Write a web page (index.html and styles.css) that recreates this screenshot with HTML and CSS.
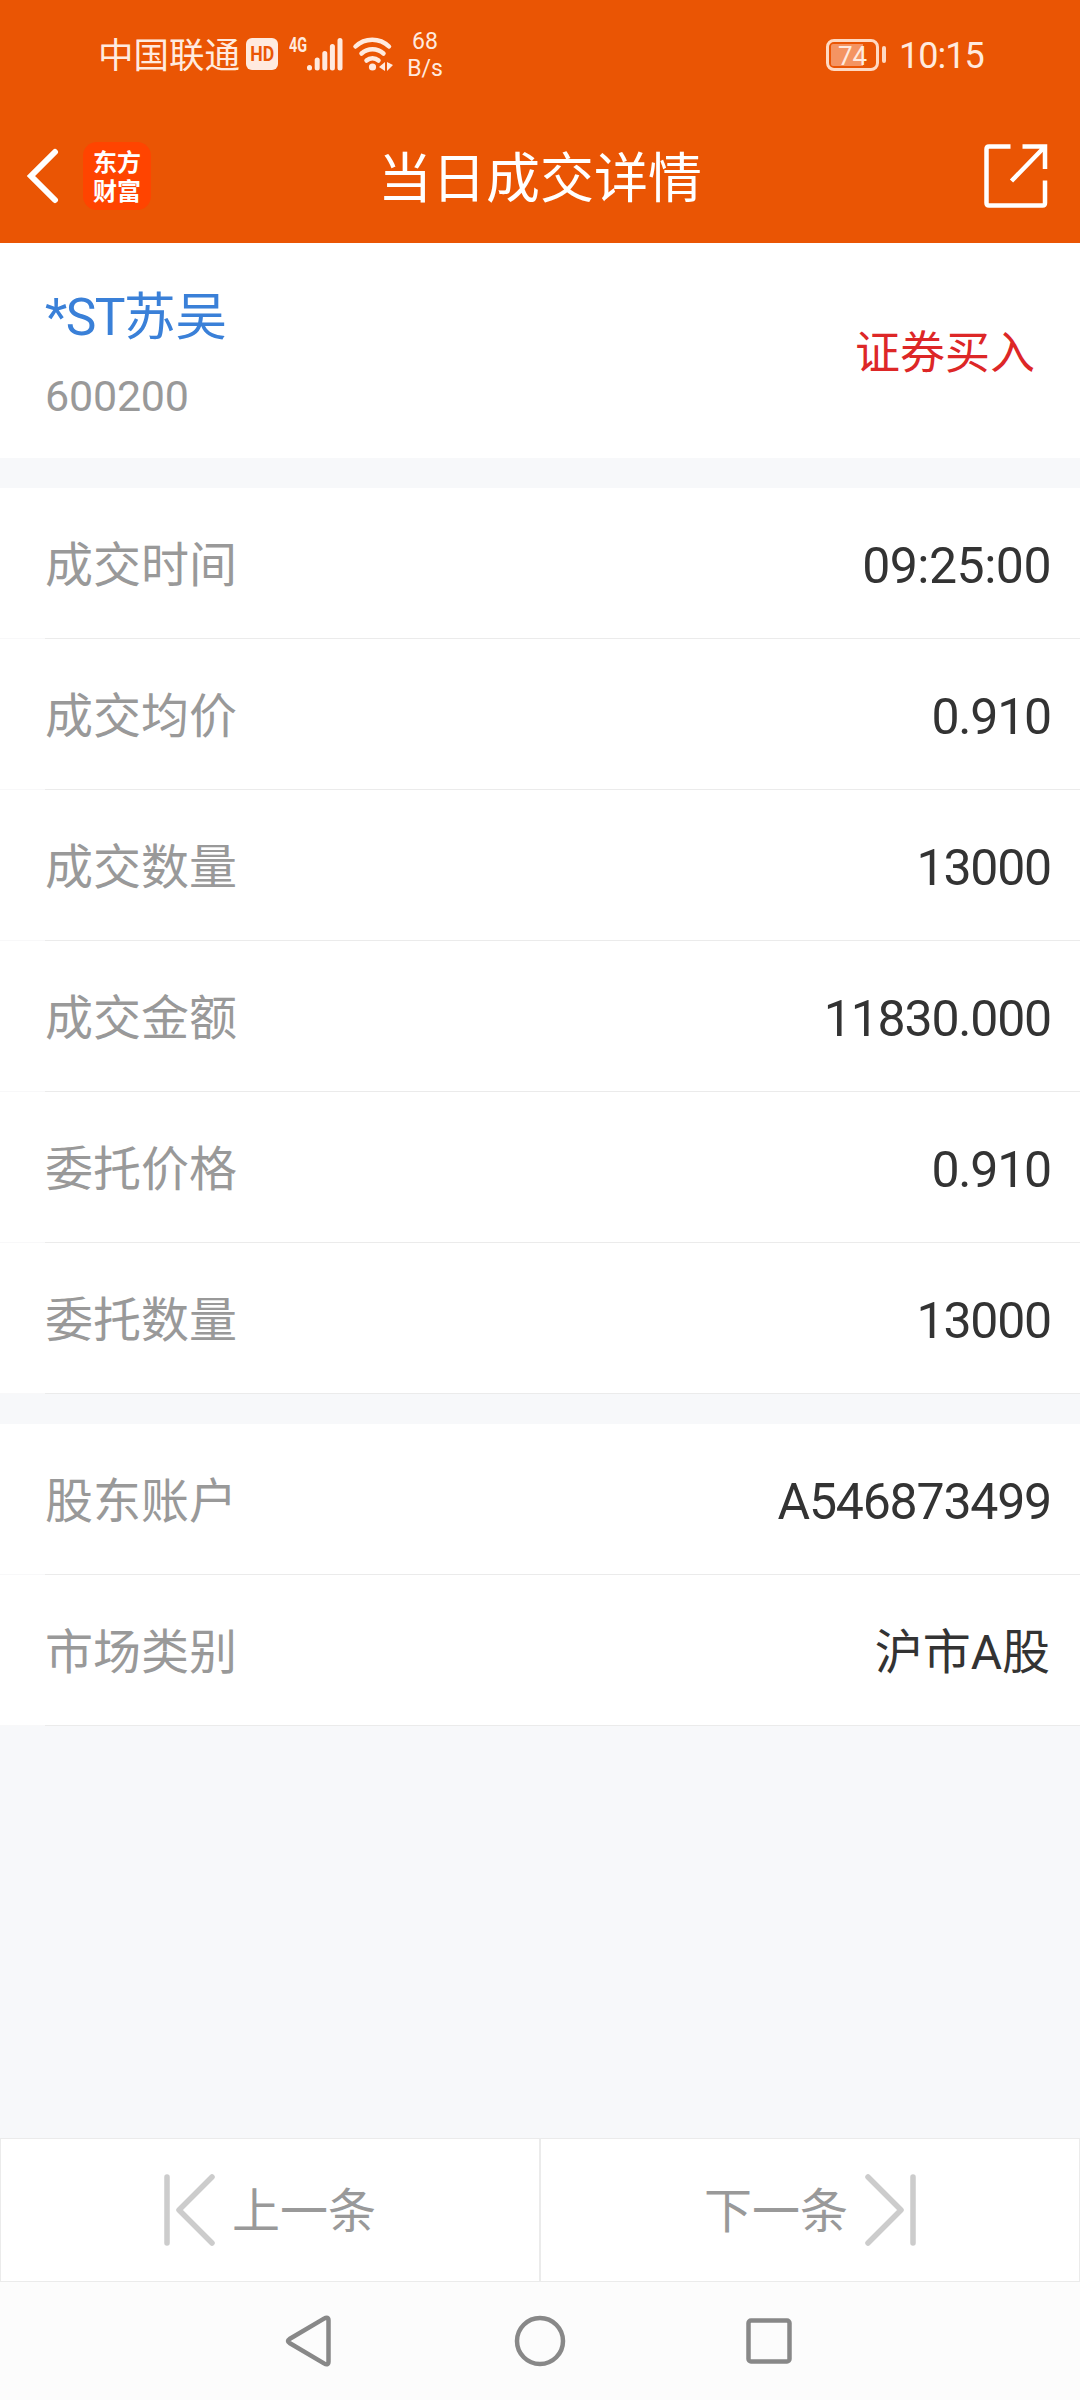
FILE: index.html
```html
<!DOCTYPE html>
<html lang="zh-CN">
<head>
<meta charset="utf-8">
<title>当日成交详情</title>
<link rel="stylesheet" href="styles.css">
</head>
<body>
<div class="screen">
  <div class="status">
    <span class="carrier">中国联通</span>
    <span class="hd"><span>HD</span></span>
    <span class="net">4G</span>
    <svg class="signal" width="36" height="34" viewBox="0 0 36 34" fill="none" stroke="#ffeadf" stroke-width="5" stroke-linecap="round"><path d="M2.5 30.500v.5M10.200 23v8M17.800 16.500v14.500M25.400 9.500v21.500M33 3.500v27.500"/></svg>
    <svg class="wifi" width="42" height="36" viewBox="0 0 42 36" fill="none" stroke="#ffeadf" stroke-width="4.500" stroke-linecap="round"><path d="M3.500 10.500A24 24 0 0 1 37 10.500M9.500 17.500A16.500 16.500 0 0 1 31.500 17.500M14.500 24.500A9 9 0 0 1 26.500 24.500"/><circle cx="20.500" cy="31" r="3.600" fill="#ffeadf" stroke="none"/><path d="M33 26v9l-6-4zM35 26v9l6-6z" fill="#ffeadf" stroke="none"/></svg>
    <span class="speed"><span>68</span><span>B/s</span></span>
    <span class="battery"><span class="shell"><span class="charge">74</span></span><span class="tip"></span></span>
    <span class="clock">10:15</span>
  </div>

  <header class="header">
    <div class="left">
      <svg class="back" width="33" height="56" viewBox="0 0 33 56" fill="none" stroke="#fff" stroke-width="6" stroke-linecap="round" stroke-linejoin="miter"><path d="M29 4L5 28L29 52"/></svg>
      <div class="logo">东方财富</div>
    </div>
    <h1 class="title">当日成交详情</h1>
    <svg class="share" width="64" height="64" viewBox="0 0 64 64" fill="none" stroke="#fff" stroke-width="4.500" stroke-linejoin="round"><path d="M26.500 2.500H5Q2.500 2.500 2.500 5V59Q2.500 61.500 5 61.500H58.500Q61 61.500 61 59V36.500"/><path d="M38.500 2.500H61V25M60 3.500L27.500 37" stroke-linejoin="miter"/></svg>
  </header>

  <section class="stock">
    <div class="names"><div class="name"><span class="latin">*ST</span>苏吴</div><div class="code">600200</div></div>
    <div class="side">证券买入</div>
  </section>

  <section class="list">
    <div class="row"><span class="label">成交时间</span><span class="value number time">09:25:00</span></div>
    <div class="row"><span class="label">成交均价</span><span class="value number">0.910</span></div>
    <div class="row"><span class="label">成交数量</span><span class="value number">13000</span></div>
    <div class="row"><span class="label">成交金额</span><span class="value number">11830.000</span></div>
    <div class="row"><span class="label">委托价格</span><span class="value number">0.910</span></div>
    <div class="row"><span class="label">委托数量</span><span class="value number">13000</span></div>
  </section>

  <section class="list">
    <div class="row"><span class="label">股东账户</span><span class="value number">A546873499</span></div>
    <div class="row"><span class="label">市场类别</span><span class="value">沪市A股</span></div>
  </section>

  <footer class="pager">
    <div class="page prev">
      <svg width="51" height="72" viewBox="0 0 51 72" fill="none" stroke="#ccc" stroke-width="5.500" stroke-linecap="round" stroke-linejoin="round"><path d="M3 3V69M48 3L15 36L48 69"/></svg>
      <span>上一条</span>
    </div>
    <div class="page next">
      <span>下一条</span>
      <svg width="51" height="72" viewBox="0 0 51 72" fill="none" stroke="#ccc" stroke-width="5.500" stroke-linecap="round" stroke-linejoin="round"><path d="M48 3V69M3 3L36 36L3 69"/></svg>
    </div>
  </footer>

  <nav class="nav">
    <svg width="54" height="54" viewBox="0 0 54 54"><path d="M40 4.600Q44.500 2 44.500 6.500V47.500Q44.500 52 40 49.400L5.500 29Q2.500 27 5.500 25Z"/></svg>
    <svg width="54" height="54" viewBox="0 0 54 54"><circle cx="27" cy="27" r="23"/></svg>
    <svg width="54" height="54" viewBox="0 0 54 54"><rect x="6.500" y="6.500" width="41" height="41" rx="2.500"/></svg>
  </nav>
</div>
</body>
</html>
```
FILE: styles.css
```css
* { box-sizing: border-box; }
body {
  margin: 0;
  font-family: Roboto, "Noto Sans CJK SC", sans-serif;
  background: #f7f8fa;
}
.screen {
  width: 1080px;
  height: 2400px;
  display: flex;
  flex-direction: column;
}
svg { display: block; flex: none; }

/* system status bar */
.status {
  height: 110px;
  background: #ea5504;
  color: #ffeadf;
  display: flex;
  align-items: center;
  padding: 0 97px 0 98px;
  white-space: nowrap;
}
.carrier { font-size: 35.500px; line-height: 40px; width: 142px; padding-top: 2px; }
.hd {
  width: 32px;
  height: 32px;
  margin: 0 0 2px 6px;
  border-radius: 6px;
  background: #ffeadf;
  color: #ea5504;
  font: bold 21px/33px Roboto, sans-serif;
  display: flex;
  justify-content: center;
}
.hd span { transform: scaleX(.84); }
.net {
  font: bold 20px/20px Roboto, sans-serif;
  margin: 0 0 20px 11px;
  width: 18px;
  transform: scaleX(.72);
  transform-origin: left;
}
.signal { margin-bottom: 3px; }
.wifi { margin: 0 0 2px 9px; }
.speed {
  display: flex;
  flex-direction: column;
  align-items: center;
  width: 38px;
  margin-left: 12px;
  font-size: 23px;
  line-height: 27px;
}
.battery { display: flex; align-items: center; gap: 3px; margin: 0 0 1px auto; }
.shell {
  width: 53px;
  height: 32px;
  border: 3px solid #ffd9c2;
  border-radius: 8px;
  padding: 2px;
  display: flex;
}
.charge {
  width: 43px;
  border-radius: 2px;
  background: linear-gradient(to right, #f49462 32px, transparent 32px);
  font-size: 26px;
  line-height: 24px;
  padding-left: 7px;
}
.tip { width: 4px; height: 17px; border-radius: 2px; background: #ffd9c2; }
.clock { font-size: 36px; line-height: 40px; width: 84px; margin-left: 13px; padding-top: 2px; letter-spacing: -1px; }

/* title bar */
.header {
  height: 133px;
  background: #ea5504;
  color: #fff;
  display: grid;
  grid-template-columns: 1fr auto 1fr;
  align-items: center;
  padding: 0 32px 2px 26px;
}
.left { display: flex; align-items: center; gap: 24px; }
.logo {
  width: 68px;
  height: 68px;
  border-radius: 14px;
  background: #ff4400;
  padding: 4px 10px 0;
  font: 700 24px/29px "Noto Sans CJK SC", sans-serif;
  word-break: break-all;
}
.title { margin: 0; padding: 8px 0 0 6px; font-size: 54px; line-height: 70px; font-weight: 400; }
.share { justify-self: end; }

/* stock summary */
.stock {
  height: 215px;
  background: #fff;
  display: flex;
  align-items: center;
  justify-content: space-between;
  padding: 7px 45px 0;
}
.name { font-size: 51.500px; line-height: 70px; color: #3a80d8; }
.latin { letter-spacing: -1.500px; }
.code { font-size: 43px; line-height: 60px; margin-top: 13px; color: #999; letter-spacing: -.2px; }
.side { font-size: 45px; line-height: 60px; color: #dd2727; }

/* detail rows */
.list { margin-top: 30px; }
.row {
  height: 151px;
  padding: 4px 30px 0 45px;
  display: flex;
  align-items: center;
  justify-content: space-between;
  font-size: 48px;
  line-height: 60px;
  background: #fff linear-gradient(to right, #f8f8f9 45px, #ebebeb 45px) bottom / 100% 1px no-repeat;
}
.label { color: #999; }
.value { color: #333; }
.number { font-size: 50px; letter-spacing: -1.200px; margin-right: -1px; }
.time { letter-spacing: -.500px; }

/* previous and next record */
.pager {
  margin-top: auto;
  height: 144px;
  display: grid;
  grid-template-columns: 1fr 1fr;
}
.page {
  border: 1px solid #ebebeb;
  background: #fff;
  color: #999;
  font-size: 48px;
  line-height: 60px;
  display: flex;
  align-items: center;
  justify-content: center;
  gap: 17px;
}
.page span { padding-top: 3px; }

/* system navigation keys */
.nav {
  height: 118px;
  background: #fcfcfc;
  display: flex;
  justify-content: center;
  gap: 175px;
  padding-top: 32px;
}
.nav svg { fill: none; stroke: #888; stroke-width: 4.500; stroke-linejoin: round; }
```
